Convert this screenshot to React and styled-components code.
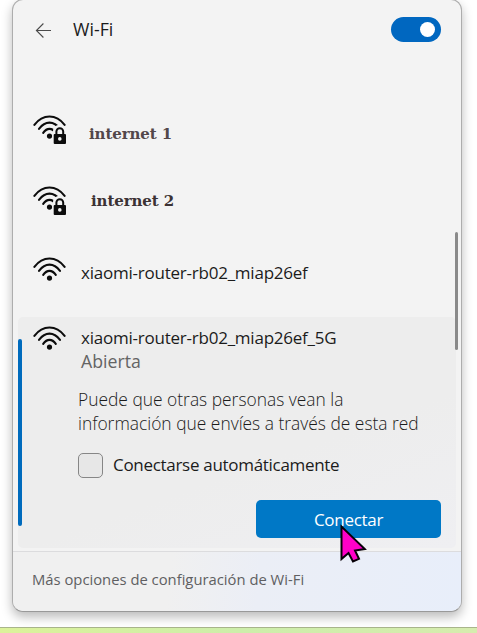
import React from "react";
import styled, { createGlobalStyle } from "styled-components";

const GlobalStyle = createGlobalStyle`
  * { box-sizing: border-box; }
  html, body { margin: 0; padding: 0; }
  body { overflow: hidden; background: #fff; font-family: "Open Sans", "Noto Sans", sans-serif; }
`;

const Screen = styled.main`
  width: 477px;
  height: 633px;
  display: flex;
  flex-direction: column;
  justify-content: space-between;
  align-items: flex-start;
  overflow: hidden;
  background: #fff;
`;

const Panel = styled.section`
  position: relative;
  width: 450px;
  height: 613px;
  margin: -1px 0 0 12px;
  display: flex;
  flex-direction: column;
  border: 1px solid #adadad;
  border-bottom-color: #999;
  border-radius: 11px;
  background: #f3f3f3;
  box-shadow: 0 5px 11px rgba(0, 0, 0, 0.27);
`;

const Desktop = styled.div`
  width: 100%;
  height: 6px;
  border-top: 1px solid #a9b58c;
  background: linear-gradient(90deg, #dcf29a, #cdeeaa 50%, #d6ecae);
`;

const Label = styled.span`
  font-size: ${(p) => p.$size || 17}px;
  font-weight: ${(p) => p.$weight || 400};
  line-height: 24px;
  letter-spacing: ${(p) => p.$track || 0}px;
  color: ${(p) => p.$color || "#1b1b1b"};
  white-space: nowrap;
`;

const SlabLabel = styled(Label)`
  font-family: "DejaVu Serif", serif;
  font-stretch: normal;
  font-weight: 700;
`;

const Header = styled.header`
  height: 98px;
  padding: 17px 20px 0 22px;
  display: flex;
  align-items: flex-start;
`;

const BackButton = styled.button`
  width: 38px;
  height: 26px;
  padding: 0;
  border: 0;
  background: none;
  display: flex;
  align-items: center;
`;

const Title = styled(Label).attrs({ as: "h1" })`
  margin: 0 auto 0 0;
`;

const Toggle = styled.button`
  width: 50px;
  height: 25px;
  padding: 0 6px;
  border: 0;
  border-radius: 13px;
  background: #0067c0;
  display: flex;
  align-items: center;
  justify-content: flex-end;
`;

const Knob = styled.span`
  width: 15px;
  height: 15px;
  border-radius: 50%;
  background: #fff;
`;

const NetworkRow = styled.div`
  height: ${(p) => p.$height}px;
  padding: ${(p) => p.$top}px 0 0 20px;
  display: flex;
  align-items: flex-start;
`;

const IconBox = styled.span`
  width: 34px;
  height: 32px;
  margin-right: ${(p) => p.$gap}px;
  flex: none;
  svg { display: block; }
`;

const NameBox = styled.span`
  display: flex;
  padding-top: ${(p) => p.$drop}px;
`;

const Selected = styled.section`
  position: relative;
  width: 438px;
  height: 231px;
  margin-left: 5px;
  padding: 9px 15px 0;
  display: flex;
  flex-direction: column;
  border-radius: 5px;
  background: linear-gradient(160deg, #ededed 60%, #efeff2);
`;

const Accent = styled.span`
  position: absolute;
  left: 0;
  top: 22px;
  width: 4px;
  height: 187px;
  border-radius: 2px;
  background: #006bbd;
`;

const SelectedHead = styled.div`
  display: flex;
`;

const Stack = styled.div`
  display: flex;
  flex-direction: column;
`;

const Status = styled(Label)`
  margin-top: -1px;
`;

const Notice = styled.p`
  margin: 14px 0 0 45px;
  display: flex;
  flex-direction: column;
`;

const AutoConnect = styled.label`
  margin: 18px 0 0 45px;
  display: flex;
  align-items: flex-start;
  gap: 10px;
`;

const Checkbox = styled.span`
  width: 25px;
  height: 25px;
  border: 1px solid #868686;
  border-radius: 5px;
  background: #e7e7e7;
`;

const ConnectButton = styled.button`
  width: 185px;
  height: 38px;
  margin: 22px 0 0 223px;
  padding: 2px 0 0;
  border: 0;
  border-radius: 5px;
  background: #0078c6;
  font-family: inherit;
  display: flex;
  align-items: center;
  justify-content: center;
`;

const Footer = styled.footer`
  height: 60px;
  margin-top: auto;
  padding: 15px 0 0 19px;
  border-top: 1px solid #dcdcde;
  border-radius: 0 0 10px 10px;
  background: linear-gradient(95deg, #f0f0f0 35%, #ebeef6 55%, #e8eefa);
`;

const ScrollThumb = styled.span`
  position: absolute;
  right: 3px;
  top: 232px;
  width: 3px;
  height: 118px;
  border-radius: 2px;
  background: #8a8a8a;
`;

const Pointer = styled.svg`
  position: absolute;
  left: 327px;
  top: 523px;
`;

function WifiIcon({ locked }) {
  return (
    <svg width="34" height="32" viewBox="0 0 34 32" fill="none">
      <g stroke="#0c0c0c" strokeWidth="2.1" strokeLinecap="round">
        <path d="M1.4 9.8C9.8-1.3 23.2-1.3 31.6 9.8" />
        <path d="M6 13.8C12.2 5.6 20.8 5.6 27 13.8" />
        <path d="M10.2 17.8C13.9 12.5 19.1 12.5 22.8 17.8" />
      </g>
      <circle cx="16.5" cy="21.1" r="2.6" fill="#0c0c0c" />
      {locked && (
        <g>
          <path d="M20 19.3v-3a6.6 6.6 0 0 1 13.3 0v3H34V30H19.5V19.3z" fill="#f3f3f3" />
          <path d="M23.4 20v-3.4a3.4 3.4 0 0 1 6.8 0V20" stroke="#0c0c0c" strokeWidth="2" />
          <rect x="20.7" y="18.9" width="12.3" height="10.2" rx="1" fill="#0c0c0c" />
          <circle cx="26.8" cy="23.9" r="1.8" fill="#f3f3f3" />
        </g>
      )}
    </svg>
  );
}

export default function App() {
  return (
    <>
      <GlobalStyle />
      <Screen>
        <Panel>
          <Header>
            <BackButton aria-label="Atrás">
              <svg width="18" height="16" viewBox="0 0 18 16" fill="none" stroke="#4a4a4a" strokeWidth="1.1">
                <path d="M16 8.5H1.5M8.4 1.5l-7 7 7 7" />
              </svg>
            </BackButton>
            <Title $size={17.8}>Wi-Fi</Title>
            <Toggle aria-label="Wi-Fi"><Knob /></Toggle>
          </Header>
          <NetworkRow $height={67} $top={17}>
            <IconBox $gap={22}><WifiIcon locked /></IconBox>
            <NameBox $drop={7}><SlabLabel $size={15} $track={-0.1} $color="#52474a">internet 1</SlabLabel></NameBox>
          </NetworkRow>
          <NetworkRow $height={67} $top={21}>
            <IconBox $gap={24}><WifiIcon locked /></IconBox>
            <NameBox $drop={3}><SlabLabel $size={15} $track={-0.1} $color="#3b3234">internet 2</SlabLabel></NameBox>
          </NetworkRow>
          <NetworkRow $height={85} $top={25}>
            <IconBox $gap={14}><WifiIcon /></IconBox>
            <NameBox $drop={4}><Label $track={-0.23}>xiaomi-router-rb02_miap26ef</Label></NameBox>
          </NetworkRow>
          <Selected>
            <Accent />
            <SelectedHead>
              <IconBox $gap={14}><WifiIcon /></IconBox>
              <Stack>
                <Label $track={-0.23}>xiaomi-router-rb02_miap26ef_5G</Label>
                <Status $size={17.7} $color="#646464">Abierta</Status>
              </Stack>
            </SelectedHead>
            <Notice>
              <Label $size={17.4} $weight={320}>Puede que otras personas vean la</Label>
              <Label $size={17.4} $weight={320}>información que envíes a través de esta red</Label>
            </Notice>
            <AutoConnect>
              <Checkbox />
              <Label $track={-0.3}>Conectarse automáticamente</Label>
            </AutoConnect>
            <ConnectButton><Label $track={-0.3} $color="#fff">Conectar</Label></ConnectButton>
          </Selected>
          <Footer><Label $size={14.8} $color="#5f5f62">Más opciones de configuración de Wi-Fi</Label></Footer>
          <ScrollThumb />
          <Pointer width="28" height="42" viewBox="0 0 28 42">
            <path d="M1.5 3.5V36l7-6 4.5 8.5 6-2.7-4-8.3 9.8-1.5z" fill="#ff00c8" stroke="#080008" strokeWidth="2" />
          </Pointer>
        </Panel>
        <Desktop />
      </Screen>
    </>
  );
}
